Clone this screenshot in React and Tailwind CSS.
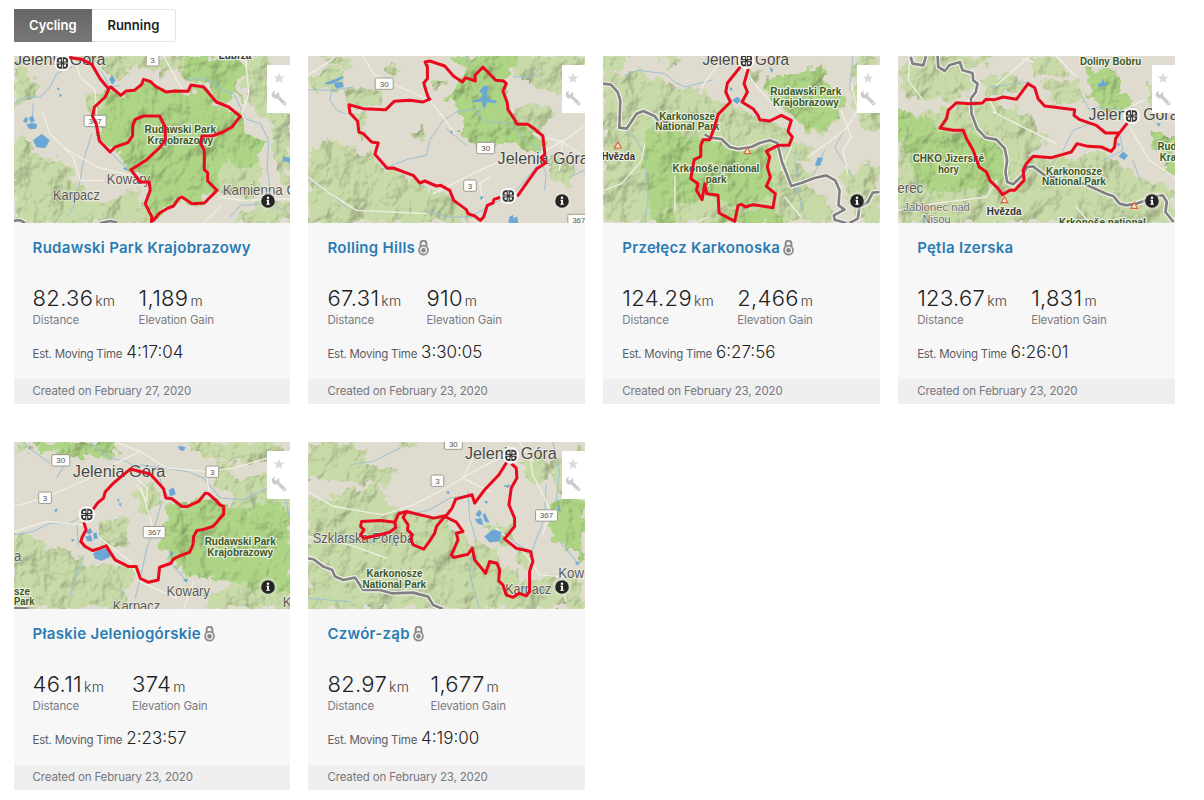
import React, { useState } from 'react';

// Map geometry is kept at 3 units per pixel, each map has its own origin
const maps = {
    rudawski: {
        box: '42 167 828 501',
        hills: [
            'M42 440 L75 395 L100 440 L130 475 L190 470 L215 530 L250 560 L240 600 L300 615 L420 560 L450 668 L42 668Z',
            'M42 180 L90 215 L115 260 L95 300 L42 320Z',
            'M150 167 L560 167 L555 215 L480 230 L470 210 L390 200 L370 235 L320 225 L290 185Z',
            'M260 290 L330 280 L300 350 L270 360Z',
            'M740 167 L800 167 L830 240 L870 340 L870 560 L835 520 L810 420 L820 370 L760 340 L735 260Z',
            'M630 420 L720 440 L790 500 L760 590 L650 590Z',
            'M720 640 L790 600 L870 610 L870 668 L700 668Z',
        ],
        parks: [
            'M325 265 L370 285 L430 240 L500 275 L560 270 L610 257 L660 320 L718 350 L740 400 L790 420 L770 470 L755 500 L725 510 L690 475 L660 500 L650 575 L600 610 L540 600 L500 625 L455 655 L435 610 L450 545 L395 510 L345 460 L305 420 L285 345Z',
            'M550 167 L660 167 L720 185 L745 210 L715 265 L730 300 L700 290 L665 310 L630 270 L610 257 L545 240Z',
        ],
        lakes: ['M100 420 L125 402 L148 420 L135 442 L110 440Z', 'M70 362 L78 350 L84 358 L78 368Z', 'M88 352 L98 348 L103 362 L92 364Z', 'M80 374 L95 368 L110 372 L108 384 L90 386Z', 'M328 238 L335 225 L345 240 L337 252Z', 'M848 470 L870 474 L868 486 L850 482Z', 'M172 262 L178 266 L174 270Z', 'M178 282 L184 284 L181 290Z', 'M370 504 L380 504 L376 510Z'],
        rivers: ['M42 310 L80 290 L120 290 L150 260 L170 220 L215 200', 'M95 375 L100 310', 'M305 215 L330 260 L360 255', 'M275 400 L250 480 L240 540 L220 620 L200 650', 'M560 240 L600 232 L640 245 L670 270 L700 280 L715 310 L735 355 L780 370 L805 420 L800 500 L812 590', 'M690 650 L720 615 L810 610 L850 630', 'M330 455 L380 505'],
        roads: ['M220 167 L240 230 L285 270 L290 350', 'M130 340 L150 400 L220 470 L240 540 L310 540', 'M490 167 L530 240 L545 265', 'M735 167 L745 280 L725 340 L735 360', 'M660 590 L720 600 L870 595', 'M190 440 L290 500 L410 530', 'M660 620 L610 668'],
        border: ['M42 662 Q58 655 75 668', 'M300 668 L330 662 L350 666'],
        route: 'M210 172 L245 177 L275 192 L300 235 L325 265 L332 260 L362 285 L378 272 L402 270 L424 253 L430 237 L450 243 L465 257 L497 275 L525 272 L563 273 L572 254 L610 260 L648 305 L685 320 L720 348 L712 358 L695 380 L668 395 L635 407 L605 407 L600 428 L612 450 L612 508 L622 517 L622 542 L650 570 L612 608 L575 610 L545 590 L535 595 L520 617 L500 625 L478 638 L460 660 L453 663 L455 650 L435 610 L450 570 L447 545 L420 545 L392 508 L440 478 L480 440 L495 420 L495 380 L478 347 L430 347 L405 357 L398 375 L397 407 L383 427 L345 440 L330 455 L298 422 L288 370 L277 348 L283 320 L315 290 L328 262',
        marker: [187, 188],
        shields: [['3', 457, 180], ['367', 285, 362]],
        labels: [
            ['Jelenia Góra', 42, 195, 274, 'city'],
            ['Lubrza', 655, 175, 98, 'town'],
            ['Rudawski Park', 433, 398, 214, 'park'],
            ['Krajobrazowy', 442, 430, 196, 'park'],
            ['Kowary', 320, 552, 130, 'place'],
            ['Karpacz', 159, 598, 140, 'place'],
            ['Kamienna Góra', 667, 584, 280, 'place'],
        ],
    },
    rolling: {
        box: '24 17 831 501',
        hills: [
            'M24 310 L70 275 L140 285 L200 310 L225 330 L260 355 L355 400 L440 430 L520 500 L490 518 L24 518Z',
            'M135 125 L180 115 L250 125 L230 165 L150 170Z', 'M24 75 L100 50 L130 60 L128 112 L60 125 L24 115Z',
            'M70 17 L155 17 L145 60 L90 45Z', 'M170 195 L200 190 L190 260 L170 240Z',
            'M260 40 L300 50 L290 75 L262 70Z', 'M390 85 L440 90 L430 110 L395 110Z',
            'M640 17 L855 17 L855 90 L800 130 L700 110 L650 70Z', 'M600 155 L650 185 L700 150 L760 190 L720 240 L650 220Z',
            'M740 320 L830 340 L800 420 L745 370Z', 'M330 245 L370 225 L385 260 L350 280Z',
        ],
        parks: ['M460 17 L655 17 L640 60 L615 95 L610 120 L640 210 L700 230 L735 280 L720 300 L690 305 L640 285 L590 295 L555 285 L520 290 L475 225 L490 205 L465 160 L440 140 L480 95 L500 60 L465 45Z'],
        lakes: ['M75 99 L100 90 L128 78 L128 84 L104 96 L84 102Z', 'M102 98 L128 96 L130 110 L108 112Z', 'M548 112 L560 106 L568 114 L560 124 L563 145 L590 152 L588 158 L560 154 L555 172 L550 168 L548 152 L520 155 L520 150 L545 146 L550 130 L540 124Z', 'M628 518 L630 500 L640 495 L640 505 L652 500 L655 518Z', 'M452 243 L458 243 L456 250Z', 'M540 442 L550 438 L546 448Z'],
        rivers: ['M24 118 L95 120 L160 110', 'M95 120 L90 150 L110 180 L135 190', 'M250 355 L330 325 L380 315 L390 270 L430 210 L470 185 L530 175', 'M545 170 L535 195 L560 215 L625 218 L650 240 L680 275 L725 300', 'M440 235 L500 285', 'M24 385 L90 430 L150 480', 'M380 480 L440 500 L510 500 L600 450 L650 420 L735 320', 'M720 325 L740 370 L735 420', 'M640 80 L700 80 L720 50', 'M810 380 L855 360', 'M500 17 L510 50'],
        roads: ['M24 75 L100 25', 'M190 17 L220 70 L300 110 L390 150 L430 200 L465 250', 'M400 430 L520 370 L640 315 L730 320', 'M700 250 L790 275 L855 320', 'M740 300 L810 260 L855 225', 'M24 380 L90 430 L170 480 L380 490', 'M570 380 L540 400 L550 450', 'M790 270 L780 360'],
        border: [],
        route: 'M388 148 L380 125 L372 98 L383 85 L383 50 L376 35 L390 32 L435 47 L462 78 L488 95 L498 82 L527 92 L526 75 L550 50 L588 90 L612 92 L620 100 L610 122 L623 157 L625 178 L640 200 L653 222 L685 222 L710 240 L730 257 L736 312 L725 322 L738 338 L712 355 L655 435 M605 440 L583 447 L580 458 L563 465 L552 500 L542 510 L525 497 L505 490 L500 478 L462 450 L450 420 L423 405 L410 407 L375 392 L360 398 L340 375 L280 353 L262 354 L237 325 L225 312 L235 278 L215 275 L190 250 L177 245 L173 212 L150 188 L147 163 L190 175 L258 178 L283 153 L330 150 L370 155 L390 146',
        marker: [626, 437],
        shields: [['30', 253, 100], ['30', 558, 293], ['3', 511, 406], ['367', 838, 509]],
        labels: [['Jelenia Góra', 594, 341, 274, 'city']],
    },
    karkonoska: {
        box: '24 17 831 501',
        hills: [
            'M24 55 L90 75 L130 45 L190 90 L270 115 L330 125 L395 160 L500 205 L560 225 L590 260 L600 330 L650 370 L640 410 L700 450 L720 518 L24 518Z',
            'M24 17 L100 17 L80 60 L24 60Z', 'M190 17 L260 17 L240 60Z',
            'M655 180 L740 190 L700 250 L620 240Z', 'M790 17 L855 17 L855 240 L810 250 L770 160Z', 'M460 60 L500 50 L490 90 L465 90Z',
            'M740 370 L855 330 L855 510 L780 500Z', 'M580 265 L660 300 L640 340 L590 320Z',
        ],
        parks: [
            'M525 85 L590 75 L690 45 L700 100 L745 145 L730 200 L690 230 L640 240 L590 200 L560 190 L540 150 L515 120Z',
            'M150 230 L250 245 L340 270 L420 300 L520 290 L540 440 L420 470 L350 430 L170 490 L150 380Z',
            'M375 490 L540 470 L570 518 L380 518Z', 'M170 490 L240 485 L250 518 L175 518Z',
        ],
        lakes: ['M413 150 L428 140 L438 150 L428 160Z', 'M662 345 L670 322 L684 324 L676 345Z', 'M405 112 L412 114 L410 122Z', 'M527 52 L535 58 L530 66Z'],
        rivers: ['M90 75 L130 60 L210 70 L240 95 L270 110 L350 90', 'M90 240 L120 260 L150 320 L160 440 L150 518', 'M540 275 L600 310', 'M600 320 L620 480', 'M690 300 L650 390', 'M812 345 L825 342', 'M750 240 L720 290 L780 390', 'M775 20 L765 120'],
        roads: ['M320 110 L390 17', 'M590 290 L560 360', 'M24 420 L80 400 L140 330 L150 280', 'M240 380 L240 480', 'M740 180 L770 260 L745 300 L760 370', 'M640 320 L750 240 L790 180 L770 100', 'M430 30 L495 120 L560 185', 'M340 500 L300 518', 'M570 440 L620 500'],
        border: ['M24 100 L48 103 L68 125 L76 150 L73 232 L95 235 L125 190 L145 182 L180 198 L190 212 L225 216 M330 252 L345 262 L380 266 L405 290 L430 296 L470 290 L495 278 L525 270 L548 278 L562 335 L580 380 L590 407 L620 398 L660 383 L695 375 L722 390 L735 420 L732 465 L750 478 L718 495 L720 508 L755 518 M765 518 L790 505 L795 470 L820 455 L835 427 L855 425'],
        route: 'M435 52 L398 98 L393 125 L407 155 L370 192 L360 228 L345 268 L325 268 L318 285 L318 318 L298 328 L288 385 L310 400 L305 420 L322 448 L330 400 L336 430 L370 435 L373 488 L420 513 L430 465 L440 462 L452 470 L475 463 L535 472 L542 430 L515 408 L527 380 L518 350 L525 320 L515 303 L550 285 L583 285 L593 260 L580 243 L590 210 L560 195 L525 212 L495 208 L490 195 L475 175 L442 155 L458 125 L448 100 L460 58',
        marker: [455, 31],
        shields: [],
        peaks: [[69, 285], [458, 302]],
        labels: [
            ['Jelenia Góra', 323, 44, 260, 'city'],
            ['Rudawski Park', 527, 134, 213, 'park'],
            ['Krajobrazowy', 535, 166, 198, 'park'],
            ['Karkonosze', 193, 208, 168, 'park'],
            ['National Park', 181, 240, 193, 'park'],
            ['Krkonoše national', 233, 365, 261, 'park'],
            ['park', 333, 397, 62, 'park'],
            ['Hvězda', 20, 329, 100, 'town'],
        ],
    },
    izerska: {
        box: '24 17 831 501',
        hills: [
            'M24 180 L100 190 L160 170 L300 150 L420 195 L470 270 L420 320 L520 325 L650 300 L700 350 L790 395 L855 430 L855 518 L24 518Z',
            'M24 70 L60 17 L320 17 L250 60 L240 130 L170 150 L60 150Z',
            'M270 85 L390 70 L400 120 L300 140Z', 'M400 20 L500 17 L540 75 L440 80Z', 'M770 90 L855 90 L855 180 L790 175Z',
            'M450 95 L560 85 L590 140 L500 165Z',
        ],
        parks: [
            'M590 55 L680 60 L690 120 L725 150 L715 185 L640 180 L600 140Z',
            'M24 180 L85 195 L150 235 L210 245 L250 310 L300 390 L280 430 L190 420 L110 430 L40 290 L24 240Z',
            'M790 245 L855 260 L855 380 L820 360 L820 320 L785 290Z', 'M200 240 L290 265 L340 300 L350 390 L310 400 L260 330Z',
        ],
        lakes: ['M688 318 L700 305 L714 315 L705 328Z', 'M624 102 L636 98 L640 86 L644 98 L656 101 L642 108 L628 108Z', 'M802 220 L812 220 L808 228Z', 'M683 280 L690 280 L687 288Z'],
        rivers: ['M575 135 L600 180 L625 170 L700 180', 'M300 110 L420 95', 'M520 300 L550 240 L600 220', 'M640 330 L700 300 L690 250', 'M730 330 L760 410', 'M590 390 L640 370'],
        roads: ['M60 17 L55 90 L100 150', 'M320 105 L420 17', 'M310 185 L420 240 L500 280', 'M500 17 L560 80', 'M430 35 L395 25', 'M720 230 L780 330 L855 380', 'M24 480 L130 460 L290 440 L320 390', 'M700 180 L760 150', 'M300 150 L320 190', 'M560 470 L600 518'],
        border: ['M62 20 L68 40 L100 45 L108 18', 'M143 17 L145 50 L165 62 L178 45 L210 35 L218 60 L248 68 L250 90 L263 100 L258 125 L243 145 L245 190 L262 235 L287 262 L320 268 L345 295 L352 330 L347 365 L352 395 L370 402 L398 375 L412 350 L430 348 L465 375 L497 382 M575 398 L610 412 L650 430 L672 438 L690 460 L710 465 L740 460 L770 450 M800 437 L820 435 L832 455 L828 485 L852 515'],
        route: 'M712 220 L688 250 L678 265 L675 290 L665 303 L635 290 L595 288 L562 280 L545 305 L520 312 L485 322 L430 318 L410 340 L400 360 L403 390 L375 420 L360 420 L338 433 L325 415 L300 390 L290 365 L268 350 L250 300 L230 265 L220 240 L190 240 L150 233 L170 205 L175 180 L200 157 L240 160 L278 158 L288 147 L315 148 L340 140 L380 147 L415 100 L435 112 L445 145 L465 167 L555 178 L553 195 L570 208 L620 225 L648 248 L688 248',
        marker: [726, 197],
        shields: [],
        peaks: [[344, 449], [734, 466]],
        labels: [
            ['Jelenia Góra', 597, 209, 270, 'city'],
            ['Doliny Bobru', 571, 43, 184, 'park'],
            ['CHKO Jizerské', 68, 335, 215, 'park'],
            ['hory', 144, 367, 63, 'park'],
            ['Karkonosze', 469, 373, 168, 'park'],
            ['National Park', 457, 405, 192, 'park'],
            ['Rudawski', 804, 299, 136, 'park'],
            ['Krajobrazowy', 811, 331, 192, 'park'],
            ['Krkonoše national', 508, 526, 261, 'park'],
            ['Hvězda', 291, 495, 104, 'town'],
            ['erec', 22, 427, 78, 'place'],
            ['Jablonec nad', 40, 482, 200, 'small'],
            ['Nisou', 98, 518, 84, 'small'],
        ],
    },
    plaskie: {
        box: '42 22 828 500',
        hills: [
            'M42 285 L120 325 L200 345 L240 375 L270 390 L340 380 L400 400 L405 430 L365 470 L380 522 L42 522Z',
            'M290 265 L370 245 L390 300 L370 340 L300 335Z', 'M560 22 L760 22 L850 30 L860 70 L760 90 L620 70Z',
            'M700 160 L740 130 L800 110 L870 190 L870 522 L740 522 L650 490 L690 420Z', 'M400 170 L470 150 L490 210 L430 240Z',
            'M640 80 L700 85 L720 180 L650 165Z', 'M42 22 L105 22 L85 50 L42 60Z', 'M620 480 L720 470 L740 522 L620 522Z',
        ],
        parks: [
            'M95 22 L345 22 L355 65 L325 80 L265 60 L220 70 L130 48Z',
            'M500 205 L560 210 L615 180 L670 210 L740 230 L810 190 L870 235 L870 470 L800 480 L730 450 L620 430 L560 425 L515 380 L480 330 L495 260Z',
        ],
        lakes: ['M280 355 L300 345 L325 340 L330 365 L305 377 L285 370Z', 'M258 292 L270 280 L276 292 L266 298Z', 'M280 296 L288 294 L292 310 L282 312Z', 'M256 306 L272 302 L276 318 L262 318Z', 'M507 165 L520 160 L525 178 L510 184Z', 'M535 35 L555 38 L550 48 L538 45Z', 'M550 435 L562 432 L558 442Z', 'M510 355 L518 350 L514 368Z', 'M356 208 L362 206 L362 214Z', 'M352 194 L357 194 L355 200Z', 'M164 226 L172 222 L168 232Z', 'M214 314 L222 314 L218 320Z'],
        rivers: ['M70 22 L100 50 L150 85', 'M270 22 L330 70 L380 80 L420 105', 'M42 300 L100 290 L150 265 L210 265 L255 240', 'M485 200 L465 270 L440 340 L420 430 L405 490', 'M470 100 L490 170 L510 190', 'M420 90 L560 110 L610 130 L660 190 L730 195 L800 160', 'M230 270 L235 330', 'M250 360 L210 480', 'M200 80 L170 130', 'M500 370 L560 440', 'M855 190 L870 260'],
        roads: ['M42 215 L130 190 L260 135 L340 90 L420 50 L500 100 L620 110 L700 100 L800 70', 'M400 120 L440 160 L440 200 L410 150', 'M420 150 L450 250 L462 300', 'M42 290 L140 260 L250 270', 'M300 310 L390 380 L420 440 L530 490', 'M620 130 L630 190', 'M345 22 L420 50', 'M580 440 L550 522'],
        border: ['M42 519 L85 521'],
        route: 'M280 222 L292 205 L310 190 L315 172 L340 145 L390 103 L450 118 L490 162 L497 190 L515 192 L545 215 L562 215 L595 200 L615 175 L625 177 L650 200 L658 210 L670 215 L670 238 L655 255 L650 262 L637 275 L605 285 L590 287 L580 305 L578 330 L568 352 L540 362 L520 372 L512 385 L478 397 L474 435 L445 442 L420 430 L408 395 L385 395 L345 375 L318 333 L300 340 L278 347 L255 335 L242 320 L247 305 L258 285 L252 265',
        marker: [260, 239],
        shields: [['30', 182, 77], ['3', 636, 111], ['3', 135, 189], ['367', 462, 292]],
        labels: [
            ['Jelenia Góra', 218, 126, 277, 'city'],
            ['Rudawski Park', 613, 330, 213, 'park'],
            ['Krajobrazowy', 621, 362, 197, 'park'],
            ['Kowary', 499, 483, 130, 'place'],
            ['Karpacz', 338, 527, 142, 'place'],
            ['Kamienna', 847, 516, 180, 'place'],
            ['a', 42, 378, 22, 'place'],
            ['sze', 42, 479, 48, 'park'],
            ['Park', 42, 511, 61, 'park'],
        ],
    },
    czwor: {
        box: '24 22 831 500',
        hills: [
            'M24 180 L110 200 L250 200 L330 240 L430 250 L480 290 L530 330 L590 340 L600 395 L660 410 L640 450 L700 440 L760 420 L855 440 L855 522 L24 522Z',
            'M24 22 L120 22 L200 50 L190 90 L290 100 L280 150 L180 150 L24 130Z', 'M90 175 L230 155 L270 180 L250 205 L120 205Z',
            'M550 270 L640 270 L640 320 L600 330Z', 'M670 80 L740 65 L750 140 L690 155Z', 'M290 22 L350 22 L340 40 L300 40Z', 'M740 90 L855 30 L855 180 L780 170Z', 'M640 340 L700 350 L690 400 L650 380Z',
        ],
        parks: [
            'M775 190 L855 190 L855 375 L815 350 L780 320 L735 280 L745 245Z',
        ],
        lakes: ['M555 305 L580 285 L605 292 L600 318 L570 322Z', 'M528 240 L538 226 L546 232 L540 246Z', 'M550 240 L556 236 L568 262 L556 260Z', 'M526 254 L544 250 L550 270 L536 266Z', 'M775 225 L780 210 L782 230Z', 'M828 382 L838 384 L832 390Z', 'M440 172 L448 170 L446 178Z', 'M614 154 L630 150 L626 158Z', 'M555 200 L564 200 L560 206Z'],
        rivers: ['M150 90 L220 80 L300 40', 'M330 240 L390 225 L450 190 L520 180', 'M505 170 L510 250 L530 320', 'M740 150 L735 250 L700 340 L690 400', 'M760 22 L780 110 L770 200', 'M780 320 L840 390', 'M520 360 L510 420 L540 522', 'M640 320 L690 350', 'M24 490 L150 500'],
        roads: ['M24 170 L100 215 L250 240 L340 210 L430 165 L540 100 L620 60', 'M690 60 L700 120 L750 220 L730 300', 'M590 280 L680 360 L720 420 L855 430', 'M530 50 L490 130 L570 170', 'M24 305 L150 330 L260 370', 'M660 22 L700 80', 'M780 420 L800 500'],
        border: ['M24 370 L42 374 L70 395 L97 405 L105 425 L130 435 L165 428 L190 465 L240 465 L275 475 L340 473 L385 485 L400 510 L430 522'],
        route: 'M620 85 L598 120 L555 165 L525 205 L517 180 L468 193 L457 220 L440 242 L402 250 L320 230 L296 237 L285 262 L243 257 L185 260 L182 275 L192 285 L182 300 L192 310 L230 302 L270 292 L288 278 L285 262 M320 230 L310 248 L325 270 L323 285 L338 300 L332 312 L340 330 L372 343 L390 318 L405 295 L410 275 L435 245 L470 262 L490 290 L470 295 L475 315 L455 360 L462 368 L505 358 L518 340 L525 375 L558 415 L570 380 L592 385 L600 405 L597 437 L610 450 L620 480 L640 487 L660 475 L680 483 L690 470 L690 410 L700 380 L693 350 L650 340 L615 312 L645 275 L645 250 L628 210 L635 160 L652 130 L650 100 L637 88',
        marker: [634, 62],
        shields: [['30', 461, 27], ['3', 413, 138], ['367', 741, 242]],
        labels: [
            ['Jelenia Góra', 496, 74, 276, 'city'],
            ['Szklarska Poręba', 38, 325, 305, 'place'],
            ['Karkonosze', 200, 426, 168, 'park'],
            ['National Park', 188, 458, 191, 'park'],
            ['Karpacz', 617, 477, 138, 'place'],
            ['Kow', 776, 430, 78, 'place'],
        ],
    },
};

const routes = [
    { id: 1, map: 'rudawski', name: 'Rudawski Park Krajobrazowy', distance: '82.36', elevation: '1,189', time: '4:17:04', created: 'February 27, 2020', col: 'w-[106px]', locked: false },
    { id: 2, map: 'rolling', name: 'Rolling Hills', distance: '67.31', elevation: '910', time: '3:30:05', created: 'February 23, 2020', col: 'w-[99px]', locked: true },
    { id: 3, map: 'karkonoska', name: 'Przełęcz Karkonoska', distance: '124.29', elevation: '2,466', time: '6:27:56', created: 'February 23, 2020', col: 'w-[115px]', locked: true },
    { id: 4, map: 'izerska', name: 'Pętla Izerska', distance: '123.67', elevation: '1,831', time: '6:26:01', created: 'February 23, 2020', col: 'w-[114px]', locked: false },
    { id: 5, map: 'plaskie', name: 'Płaskie Jeleniogórskie', distance: '46.11', elevation: '374', time: '2:23:57', created: 'February 23, 2020', col: 'w-[99.5px]', locked: true },
    { id: 6, map: 'czwor', name: 'Czwór-ząb', distance: '82.97', elevation: '1,677', time: '4:19:00', created: 'February 23, 2020', col: 'w-[103px]', locked: true },
];

const labelStyles = {
    city: { fontSize: 51, fill: '#484848', strokeWidth: 4 },
    place: { fontSize: 42, fill: '#585858', strokeWidth: 4 },
    small: { fontSize: 35, fill: '#6c6c6c', strokeWidth: 4 },
    park: { fontSize: 30, fill: '#36591f', fontWeight: 700, strokeWidth: 7 },
    town: { fontSize: 30, fill: '#333333', fontWeight: 700, strokeWidth: 7 },
};

const shieldWidths = { 1: 38, 2: 54, 3: 66 };

const RouteMap = ({ map, id }) => {
    const { box, hills, parks, lakes, rivers, roads, border, route, marker, shields, labels, peaks = [] } = map;
    const [mx, my] = marker;

    return (
        <svg viewBox={box} preserveAspectRatio="none" className="block h-full w-full" fontFamily='"Liberation Sans", Arial, sans-serif'>
            <defs>
                <filter id={`relief-${id}`} x="-5%" y="-5%" width="110%" height="110%" colorInterpolationFilters="sRGB">
                    <feTurbulence type="fractalNoise" baseFrequency="0.012 0.01" numOctaves="4" seed={id * 7} result="noise" />
                    <feTurbulence type="fractalNoise" baseFrequency="0.03" numOctaves="3" seed={id * 3} result="edges" />
                    <feDisplacementMap in="SourceGraphic" in2="edges" scale="55" xChannelSelector="R" yChannelSelector="G" result="shape" />
                    <feDiffuseLighting in="noise" surfaceScale="20" diffuseConstant="1.2" lightingColor="#ffffff" result="light">
                        <feDistantLight azimuth="225" elevation="56" />
                    </feDiffuseLighting>
                    <feComposite in="shape" in2="light" operator="arithmetic" k1="0.4" k2="0.62" result="lit" />
                    <feComposite in="lit" in2="shape" operator="in" />
                </filter>
            </defs>

            <rect x="0" y="0" width="900" height="700" fill="#dfdbce" />
            <g filter={`url(#relief-${id})`}>
                {hills.map(d => <path key={d} d={d} fill="#c4d6a4" />)}
                {parks.map(d => <path key={d} d={d} fill="#abd083" />)}
            </g>

            <g fill="none" strokeLinejoin="round" strokeLinecap="round">
                {rivers.map(d => <path key={d} d={d} stroke="#9dc0d2" strokeWidth="3" />)}
                {roads.map(d => <path key={d} d={d} stroke="#f1eee5" strokeWidth="4" />)}
            </g>
            {lakes.map(d => <path key={d} d={d} fill="#6aa6d6" stroke="#6aa6d6" strokeWidth="2" strokeLinejoin="round" />)}
            <g fill="none" strokeLinejoin="round">
                {border.map(d => <path key={d} d={d} stroke="#f3f2ed" strokeWidth="15" />)}
                {border.map(d => <path key={d} d={d} stroke="#808080" strokeWidth="8" />)}
            </g>

            {shields.map(([num, x, y]) => {
                const w = shieldWidths[num.length];
                return (
                    <g key={`${x}-${y}`}>
                        <rect x={x - w / 2} y={y - 17} width={w} height="34" rx="4" fill="#fdfdfb" stroke="#8b8b84" strokeWidth="2.5" />
                        <text x={x} y={y + 9} textAnchor="middle" fontSize="24" fill="#555">{num}</text>
                    </g>
                );
            })}
            {peaks.map(([x, y]) => (
                <path key={x} d={`M${x} ${y - 10}L${x + 10} ${y + 8}H${x - 10}Z`} fill="#f4e9d8" stroke="#e2633a" strokeWidth="3.5" />
            ))}
            {labels.map(([text, x, y, width, kind]) => (
                <text
                    key={`${text}-${y}`}
                    x={x}
                    y={y}
                    textLength={width}
                    lengthAdjust="spacingAndGlyphs"
                    stroke="#f4f3ea"
                    strokeOpacity="0.85"
                    strokeLinejoin="round"
                    paintOrder="stroke"
                    {...labelStyles[kind]}
                >
                    {text}
                </text>
            ))}

            <path d={route} fill="none" stroke="#ea0a20" strokeWidth="9" strokeLinejoin="round" strokeLinecap="round" />
            <circle cx={mx} cy={my} r="25" fill="#f9f9f7" />
            {/* finish flag: four dark discs with light gaps at the crossings */}
            <g transform={`translate(${mx} ${my})`}>
                <rect x="-17" y="-17" width="34" height="34" rx="11" fill="#333" />
                <path d="M-17 0H17M0 -17V17" stroke="#f9f9f7" strokeWidth="2.5" />
                <g fill="#f9f9f7">
                    <rect x="-11" y="-11" width="6.5" height="6.5" />
                    <rect x="4.5" y="-11" width="6.5" height="6.5" />
                    <rect x="-11" y="4.5" width="6.5" height="6.5" />
                    <rect x="4.5" y="4.5" width="6.5" height="6.5" />
                </g>
                <rect x="-4" y="-4" width="8" height="8" fill="#333" />
            </g>
        </svg>
    );
};

const StarIcon = () => (
    <svg viewBox="0 0 12 12" className="h-3 w-3" fill="#d9d9d9">
        <path d="M6 .6 7.4 4.4 11.5 4.6 8.3 7.1 9.4 11.1 6 8.8 2.6 11.1 3.7 7.1.5 4.6 4.6 4.4Z" />
    </svg>
);

const WrenchIcon = () => (
    <svg viewBox="0 0 16 16" className="h-4 w-4">
        <path d="M4.2.7A4 4 0 0 0 .7 5.2 4 4 0 0 0 6 8.2L12.3 14.7A1.7 1.7 0 0 0 14.9 12.3L8.2 6A4 4 0 0 0 7.2 1.8L5.8 4.3 4.2 4.6 3.2 3.3Z" fill="#cbcbcb" />
        <circle cx="13.3" cy="13.2" r=".7" fill="#fff" />
    </svg>
);

const InfoIcon = () => (
    <svg viewBox="0 0 20 20" className="h-5 w-5">
        <circle cx="10" cy="10" r="9.8" fill="#e4e5d8" fillOpacity=".45" />
        <circle cx="10" cy="10" r="6.8" fill="#252525" />
        <circle cx="10" cy="6.8" r="1.2" fill="#fff" />
        <path d="M8.4 8.7h2.6v4h.9v1.1H8.3v-1.1h.8V9.8h-.7Z" fill="#fff" />
    </svg>
);

const LockIcon = () => (
    <svg viewBox="0 0 11 16" className="h-4 w-[11px]" fill="none">
        <path d="M2.6 7.5V3.6a2.9 2.9 0 0 1 5.8 0V7.5" stroke="#8c8c8c" strokeWidth="2" />
        <circle cx="5.5" cy="10.2" r="4.5" stroke="#8c8c8c" strokeWidth="1.7" fill="#eeeeee" />
        <circle cx="5.5" cy="10.2" r="2.2" fill="#868686" />
    </svg>
);

const Stat = ({ value, unit, label, className = '' }) => (
    <li className={className}>
        <div className="flex h-[26px] items-baseline whitespace-nowrap text-[#222]">
            <span className="text-[22px] leading-[26px] font-light tracking-[0.3px]">{value}</span>
            <span className="ml-[2px] text-[14px] leading-[26px] font-light tracking-[0.2px] text-[#444]">{unit}</span>
        </div>
        <div className="text-[11.5px] leading-[18px] tracking-[-0.12px] whitespace-nowrap text-[#7b7b83]">{label}</div>
    </li>
);

const RouteCard = ({ route }) => (
    <li className="flex h-[348.5px] flex-col bg-[#f7f7f7]">
        <div className="relative h-[167px] shrink-0 overflow-hidden">
            <RouteMap map={maps[route.map]} id={route.id} />
            <div className="absolute top-[9.5px] right-0 flex h-12 w-[23px] flex-col items-center bg-white pt-[7px]">
                <StarIcon />
                <div className="mt-[6px]"><WrenchIcon /></div>
            </div>
            <div className="absolute top-[135px] right-[12.5px]"><InfoIcon /></div>
        </div>
        <div className="flex-1 px-[19px] pt-[14px]">
            <div className="flex items-center gap-[3px]">
                <h3 className="text-[15px] leading-[22px] font-semibold tracking-[0.28px] whitespace-nowrap text-[#2b7cb3]">{route.name}</h3>
                {route.locked && <LockIcon />}
            </div>
            <ul className="mt-[26px] flex">
                <Stat value={route.distance} unit="km" label="Distance" className={route.col} />
                <Stat value={route.elevation} unit="m" label="Elevation Gain" />
            </ul>
            <div className="mt-[10px] flex items-baseline gap-1 leading-[26px] whitespace-nowrap">
                <span className="text-[11.5px] tracking-[-0.25px] text-[#5c5c64]">Est. Moving Time</span>
                <span className="text-[17px] font-[350] text-[#222]">{route.time}</span>
            </div>
        </div>
        <div className="h-[25px] bg-[#efefef] px-[19px] text-[11.5px] leading-[24px] tracking-[-0.14px] text-[#777780]">
            Created on {route.created}
        </div>
    </li>
);

const App = () => {
    const [sport, setSport] = useState('Cycling');

    return (
        <div className="min-h-screen bg-white pt-[9px] pl-[13.6px] font-['Inter',sans-serif]">
            <div className="flex h-[33px]">
                {['Cycling', 'Running'].map(name => (
                    <button
                        key={name}
                        onClick={() => setSport(name)}
                        className={`text-[13px] font-semibold ${name === 'Cycling' ? 'w-[78.5px]' : 'w-[83.5px] rounded-r-[3px] border border-l-0 border-[#e2e2ea]'} ${sport === name ? 'bg-linear-to-b from-[#666] to-[#777] text-white' : 'bg-white text-[#222]'}`}
                    >
                        {name}
                    </button>
                ))}
            </div>
            <ul className="mt-[13.6px] grid w-[1161px] grid-cols-4 gap-x-[18.4px] gap-y-[37.8px]">
                {routes.map(route => <RouteCard key={route.id} route={route} />)}
            </ul>
        </div>
    );
};

export default App;
